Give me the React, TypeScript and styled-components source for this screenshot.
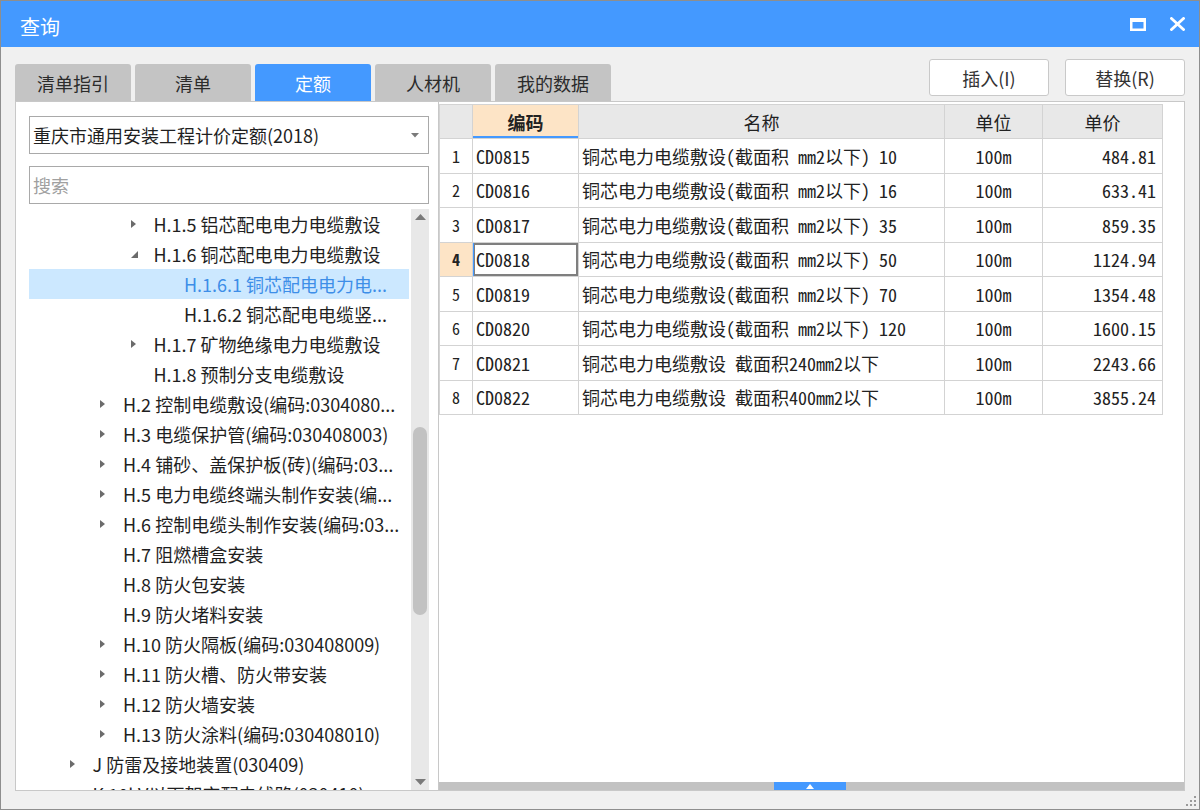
import React from 'react';
import styled, { createGlobalStyle } from 'styled-components';

const UI = `"Noto Sans CJK SC", "Noto Sans", sans-serif`;
const MONO = `"Noto Sans Mono CJK SC", "Liberation Mono", "Noto Sans CJK SC", monospace`;

const GlobalStyle = createGlobalStyle`
  html, body { margin: 0; padding: 0; background: #ffffff; }
  body { font-family: ${UI}; }
  * { box-sizing: border-box; }
`;

const Window = styled.div`
  position: relative;
  width: 1200px;
  height: 810px;
  border: 1px solid #8e8e8e;
  background: #f0f0f0;
  display: flex;
  flex-direction: column;
  overflow: hidden;
  font-family: ${UI};
`;

const TitleBar = styled.div`
  height: 46px;
  flex-shrink: 0;
  background: #4499ff;
  display: flex;
  align-items: center;
  padding: 0 14px 0 19px;
  color: #ffffff;
`;

const Title = styled.div`
  flex: 1;
  font-size: 20px;
  line-height: 1;
  padding-top: 5px;
`;

const TitleButtons = styled.div`
  display: flex;
  align-items: center;
  gap: 24px;
`;

const Body = styled.div`
  flex: 1;
  min-height: 0;
  display: flex;
  flex-direction: column;
  padding: 12px 14px 18px 14px;
`;

const Toolbar = styled.div`
  height: 42px;
  flex-shrink: 0;
  display: flex;
  justify-content: space-between;
`;

const Tabs = styled.div`
  align-self: flex-end;
  display: flex;
  gap: 4px;
`;

const Tab = styled.div<{ $active?: boolean }>`
  width: 116px;
  height: 37px;
  border-radius: 3px 3px 0 0;
  background: ${(p) => (p.$active ? '#4499ff' : '#c4c4c4')};
  color: ${(p) => (p.$active ? '#ffffff' : '#2b2b2b')};
  font-size: 18px;
  display: flex;
  align-items: center;
  justify-content: center;
  padding-top: 1px;
`;

const Actions = styled.div`
  display: flex;
  gap: 16px;
  align-self: flex-start;
`;

const ActionButton = styled.div`
  width: 120px;
  height: 37px;
  background: #ffffff;
  border: 1px solid #c9c9c9;
  border-radius: 3px;
  font-size: 18px;
  color: #333333;
  display: flex;
  align-items: center;
  justify-content: center;
`;

const Main = styled.div`
  flex: 1;
  min-height: 0;
  display: flex;
`;

const LeftPanel = styled.div`
  width: 424px;
  flex-shrink: 0;
  background: #ffffff;
  border: 1px solid #c8c8c8;
  display: flex;
  flex-direction: column;
  padding: 14px 9px 0 13px;
`;

const Select = styled.div`
  height: 38px;
  flex-shrink: 0;
  border: 1px solid #a9a9a9;
  display: flex;
  align-items: center;
  padding: 0 9px 0 3px;
  font-size: 18px;
  color: #1f1f1f;
`;

const SelectText = styled.div`
  flex: 1;
`;

const SearchBox = styled.div`
  margin-top: 12px;
  height: 38px;
  flex-shrink: 0;
  border: 1px solid #a9a9a9;
  display: flex;
  align-items: center;
  padding: 0 3px;
  font-size: 18px;
  color: #a0a0a0;
`;

const TreeArea = styled.div`
  margin-top: 5px;
  flex: 1;
  min-height: 0;
  display: flex;
`;

const TreeList = styled.div`
  flex: 1;
  min-width: 0;
  overflow: hidden;
  padding-right: 2px;
`;

const TreeRow = styled.div<{ $level: number; $selected?: boolean }>`
  height: 30px;
  display: flex;
  align-items: center;
  padding-left: ${(p) => 7 + p.$level * 30.5}px;
  background: ${(p) => (p.$selected ? '#cce8ff' : 'transparent')};
  color: ${(p) => (p.$selected ? '#3d8ee8' : '#1f1f1f')};
  font-size: 18px;
  white-space: nowrap;
`;

const ArrowSlot = styled.div`
  width: 26px;
  flex-shrink: 0;
  display: flex;
  align-items: center;
  padding-left: 2px;
`;

const VScroll = styled.div`
  position: relative;
  width: 18px;
  flex-shrink: 0;
  background: #e8e8e8;
  display: flex;
  flex-direction: column;
  align-items: center;
  justify-content: space-between;
  padding: 5px 0 5px;
`;

const VThumb = styled.div<{ $top: number; $height: number }>`
  position: absolute;
  left: 2px;
  top: ${(p) => p.$top}px;
  width: 14px;
  height: ${(p) => p.$height}px;
  border-radius: 7px;
  background: #c2c2c2;
`;

const RightPanel = styled.div`
  flex: 1;
  min-width: 0;
  background: #ffffff;
  border: 1px solid #c8c8c8;
  border-left: none;
  display: flex;
  flex-direction: column;
`;

const TableWrap = styled.div`
  flex: 1;
  min-height: 0;
  padding-top: 2px;
  overflow: hidden;
`;

const Grid = styled.table`
  border-collapse: collapse;
  table-layout: fixed;
  width: 723px;
`;

const HeadCell = styled.th<{ $active?: boolean }>`
  height: 34px;
  border: 1px solid #d3d3d3;
  background: ${(p) => (p.$active ? '#fde4c6' : '#e8e8e8')};
  box-shadow: ${(p) => (p.$active ? 'inset 0 -2px 0 #4499ff' : 'none')};
  font-family: ${UI};
  font-size: 18px;
  font-weight: ${(p) => (p.$active ? 700 : 400)};
  color: #222222;
  text-align: center;
  padding: 0;
`;

const Row = styled.tr`
  height: 34.5px;
`;

const NumCell = styled.td<{ $active?: boolean }>`
  border: 1px solid #d3d3d3;
  background: ${(p) => (p.$active ? '#fde4c6' : '#ffffff')};
  font-family: ${MONO};
  font-size: 16px;
  font-weight: ${(p) => (p.$active ? 700 : 400)};
  color: #222222;
  text-align: center;
  padding: 0;
`;

const Cell = styled.td<{ $align?: 'left' | 'center' | 'right'; $selected?: boolean }>`
  border: 1px solid #d3d3d3;
  font-family: ${MONO};
  font-size: 18px;
  color: #222222;
  white-space: nowrap;
  overflow: hidden;
  text-align: ${(p) => p.$align || 'left'};
  padding: ${(p) => (p.$align === 'right' ? '0 6px 0 0' : p.$align === 'center' ? '0' : '0 0 0 3px')};
  box-shadow: ${(p) => (p.$selected ? 'inset 1px 0 0 #4499ff, inset 0 0 0 2px #7f7f7f' : 'none')};
`;

const HScroll = styled.div`
  height: 8px;
  flex-shrink: 0;
  background: #c2c2c2;
  display: flex;
`;

const HThumb = styled.div<{ $offset: number }>`
  margin-left: ${(p) => p.$offset}px;
  width: 72px;
  height: 8px;
  background: #4499ff;
  display: flex;
  align-items: center;
  justify-content: center;
`;

const Grip = styled.svg`
  position: absolute;
  right: 3px;
  bottom: 3px;
`;

type Tree = { level: number; arrow?: 'right' | 'down'; text: string; selected?: boolean };

const treeItems: Tree[] = [
  { level: 3, arrow: 'right', text: 'H.1.5 铝芯配电电力电缆敷设' },
  { level: 3, arrow: 'down', text: 'H.1.6 铜芯配电电力电缆敷设' },
  { level: 4, text: 'H.1.6.1 铜芯配电电力电...', selected: true },
  { level: 4, text: 'H.1.6.2 铜芯配电电缆竖...' },
  { level: 3, arrow: 'right', text: 'H.1.7 矿物绝缘电力电缆敷设' },
  { level: 3, text: 'H.1.8 预制分支电缆敷设' },
  { level: 2, arrow: 'right', text: 'H.2 控制电缆敷设(编码:0304080...' },
  { level: 2, arrow: 'right', text: 'H.3 电缆保护管(编码:030408003)' },
  { level: 2, arrow: 'right', text: 'H.4 铺砂、盖保护板(砖)(编码:03...' },
  { level: 2, arrow: 'right', text: 'H.5 电力电缆终端头制作安装(编...' },
  { level: 2, arrow: 'right', text: 'H.6 控制电缆头制作安装(编码:03...' },
  { level: 2, text: 'H.7 阻燃槽盒安装' },
  { level: 2, text: 'H.8 防火包安装' },
  { level: 2, text: 'H.9 防火堵料安装' },
  { level: 2, arrow: 'right', text: 'H.10 防火隔板(编码:030408009)' },
  { level: 2, arrow: 'right', text: 'H.11 防火槽、防火带安装' },
  { level: 2, arrow: 'right', text: 'H.12 防火墙安装' },
  { level: 2, arrow: 'right', text: 'H.13 防火涂料(编码:030408010)' },
  { level: 1, arrow: 'right', text: 'J 防雷及接地装置(030409)' },
  { level: 1, arrow: 'right', text: 'K 10kV以下架空配电线路(030410)' },
];

const rows = [
  ['CD0815', '铜芯电力电缆敷设(截面积 mm2以下) 10', '100m', '484.81'],
  ['CD0816', '铜芯电力电缆敷设(截面积 mm2以下) 16', '100m', '633.41'],
  ['CD0817', '铜芯电力电缆敷设(截面积 mm2以下) 35', '100m', '859.35'],
  ['CD0818', '铜芯电力电缆敷设(截面积 mm2以下) 50', '100m', '1124.94'],
  ['CD0819', '铜芯电力电缆敷设(截面积 mm2以下) 70', '100m', '1354.48'],
  ['CD0820', '铜芯电力电缆敷设(截面积 mm2以下) 120', '100m', '1600.15'],
  ['CD0821', '铜芯电力电缆敷设 截面积240mm2以下', '100m', '2243.66'],
  ['CD0822', '铜芯电力电缆敷设 截面积400mm2以下', '100m', '3855.24'],
];

const Arrow = ({ dir }: { dir?: 'right' | 'down' }) => {
  if (dir === 'right')
    return (
      <svg width="7" height="10" viewBox="0 0 7 10">
        <path d="M1 1 L6 5 L1 9 Z" fill="#6b6b6b" />
      </svg>
    );
  if (dir === 'down')
    return (
      <svg width="9" height="9" viewBox="0 0 9 9">
        <path d="M8 1 L8 8 L1 8 Z" fill="#6b6b6b" />
      </svg>
    );
  return null;
};

export default function App() {
  return (
    <>
      <GlobalStyle />
      <Window>
        <TitleBar>
          <Title>查询</Title>
          <TitleButtons>
            <svg width="16" height="13" viewBox="0 0 16 13">
              <path d="M0 0 H16 V13 H0 Z M2.5 4 V10.5 H13.5 V4 Z" fill="#ffffff" fillRule="evenodd" />
            </svg>
            <svg width="15" height="14" viewBox="0 0 15 14">
              <path d="M1.5 1.5 L13.5 12.5 M13.5 1.5 L1.5 12.5" stroke="#ffffff" strokeWidth="2.8" strokeLinecap="square" />
            </svg>
          </TitleButtons>
        </TitleBar>
        <Body>
          <Toolbar>
            <Tabs>
              <Tab>清单指引</Tab>
              <Tab>清单</Tab>
              <Tab $active>定额</Tab>
              <Tab>人材机</Tab>
              <Tab>我的数据</Tab>
            </Tabs>
            <Actions>
              <ActionButton>插入(I)</ActionButton>
              <ActionButton>替换(R)</ActionButton>
            </Actions>
          </Toolbar>
          <Main>
            <LeftPanel>
              <Select>
                <SelectText>重庆市通用安装工程计价定额(2018)</SelectText>
                <svg width="8" height="5" viewBox="0 0 8 5">
                  <path d="M0 0 H8 L4 4.5 Z" fill="#7a7a7a" />
                </svg>
              </Select>
              <SearchBox>搜索</SearchBox>
              <TreeArea>
                <TreeList>
                  {treeItems.map((t, i) => (
                    <TreeRow key={i} $level={t.level} $selected={t.selected}>
                      <ArrowSlot>
                        <Arrow dir={t.arrow} />
                      </ArrowSlot>
                      {t.text}
                    </TreeRow>
                  ))}
                </TreeList>
                <VScroll>
                  <svg width="11" height="6" viewBox="0 0 11 6">
                    <path d="M0 6 L5.5 0 L11 6 Z" fill="#7a7a7a" />
                  </svg>
                  <VThumb $top={218} $height={188} />
                  <svg width="11" height="6" viewBox="0 0 11 6">
                    <path d="M0 0 L11 0 L5.5 6 Z" fill="#7a7a7a" />
                  </svg>
                </VScroll>
              </TreeArea>
            </LeftPanel>
            <RightPanel>
              <TableWrap>
                <Grid>
                  <colgroup>
                    <col style={{ width: 33 }} />
                    <col style={{ width: 106 }} />
                    <col style={{ width: 366 }} />
                    <col style={{ width: 98 }} />
                    <col style={{ width: 120 }} />
                  </colgroup>
                  <thead>
                    <tr>
                      <HeadCell />
                      <HeadCell $active>编码</HeadCell>
                      <HeadCell>名称</HeadCell>
                      <HeadCell>单位</HeadCell>
                      <HeadCell>单价</HeadCell>
                    </tr>
                  </thead>
                  <tbody>
                    {rows.map((r, i) => (
                      <Row key={r[0]}>
                        <NumCell $active={i === 3}>{i + 1}</NumCell>
                        <Cell $selected={i === 3}>{r[0]}</Cell>
                        <Cell>{r[1]}</Cell>
                        <Cell $align="center">{r[2]}</Cell>
                        <Cell $align="right">{r[3]}</Cell>
                      </Row>
                    ))}
                  </tbody>
                </Grid>
              </TableWrap>
              <HScroll>
                <HThumb $offset={335}>
                  <svg width="8" height="5" viewBox="0 0 8 5">
                    <path d="M0 5 L4 0 L8 5 Z" fill="#ffffff" />
                  </svg>
                </HThumb>
              </HScroll>
            </RightPanel>
          </Main>
        </Body>
        <Grip width="10" height="10" viewBox="0 0 10 10">
          <g fill="#9a9a9a">
            <rect x="8" y="0" width="2" height="2" />
            <rect x="8" y="4" width="2" height="2" />
            <rect x="4" y="4" width="2" height="2" />
            <rect x="8" y="8" width="2" height="2" />
            <rect x="4" y="8" width="2" height="2" />
            <rect x="0" y="8" width="2" height="2" />
          </g>
        </Grip>
      </Window>
    </>
  );
}
